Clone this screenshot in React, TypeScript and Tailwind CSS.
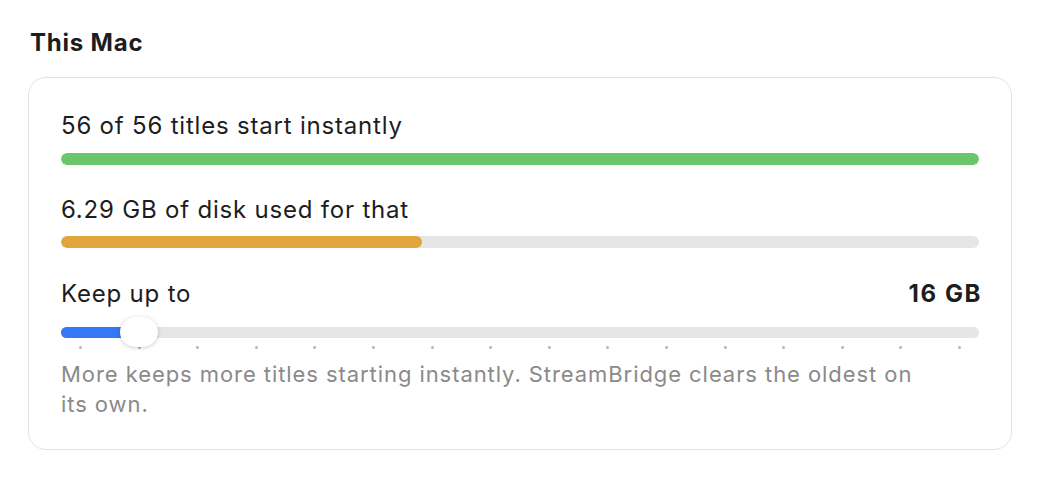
import React from 'react';

const TICKS = 16;

function Meter({ pct, color }: { pct: number; color: string }) {
  return (
    <div className="h-3 w-full overflow-hidden rounded-full bg-[#e6e6e6]">
      <div className={`h-full rounded-full ${color}`} style={{ width: `${pct}%` }} />
    </div>
  );
}

function StorageSlider({ value }: { value: number }) {
  // thumb travels between the first and last tick, 19px in from each end
  const pos = value / (TICKS - 1);
  return (
    <div>
      <div className="relative h-[30px]">
        <div className="absolute left-0 right-0 top-[10px] h-[11px] rounded-full bg-[#e6e6e6]" />
        <div
          className="absolute left-0 top-[10px] h-[11px] rounded-full bg-[#3478f6]"
          style={{ width: `calc(19px + (100% - 38px) * ${pos})` }}
        />
        <div
          className="absolute top-0 h-[30px] w-[38px] rounded-full bg-white shadow-[0_1px_4px_rgba(0,0,0,0.18),0_0_1px_rgba(0,0,0,0.1)]"
          style={{ left: `calc((100% - 38px) * ${pos})` }}
        />
      </div>
      <div className="-mt-[1px] flex justify-between px-[18px]">
        {Array.from({ length: TICKS }).map((_, i) => (
          <span key={i} className="h-[3px] w-[3px] rounded-full bg-[#b5b5b5]" />
        ))}
      </div>
    </div>
  );
}

export default function App() {
  return (
    <div
      className="min-h-screen bg-white px-7 pt-[29px] text-[#1d1d1f]"
      style={{ fontFamily: 'Inter, "Noto Sans", sans-serif' }}
    >
      <h2 className="pl-[2px] text-[24px] font-bold leading-7 tracking-[0.8px]">This Mac</h2>

      <div className="mt-5 w-[984px] rounded-[18px] border border-[#e2e2e2] bg-white px-8 pt-[34px] pb-[30px] tracking-[0.8px]">
        <p className="text-[24px] leading-7">56 of 56 titles start instantly</p>
        <div className="mt-[13px]">
          <Meter pct={100} color="bg-[#6bc569]" />
        </div>

        <p className="mt-[31px] text-[24px] leading-7">6.29 GB of disk used for that</p>
        <div className="mt-3">
          <Meter pct={39.3} color="bg-[#e0a53b]" />
        </div>

        <div className="mt-8 flex items-center justify-between text-[24px] leading-7">
          <span>Keep up to</span>
          <span className="-mr-[3px] font-bold tracking-[1.6px]">16 GB</span>
        </div>

        <div className="mt-[9px]">
          <StorageSlider value={1} />
        </div>

        <p className="mt-[10px] max-w-[875px] text-[22px] leading-[30px] tracking-[0.93px] text-[#8a8a8a]">
          More keeps more titles starting instantly. StreamBridge clears the oldest on its own.
        </p>
      </div>
    </div>
  );
}
